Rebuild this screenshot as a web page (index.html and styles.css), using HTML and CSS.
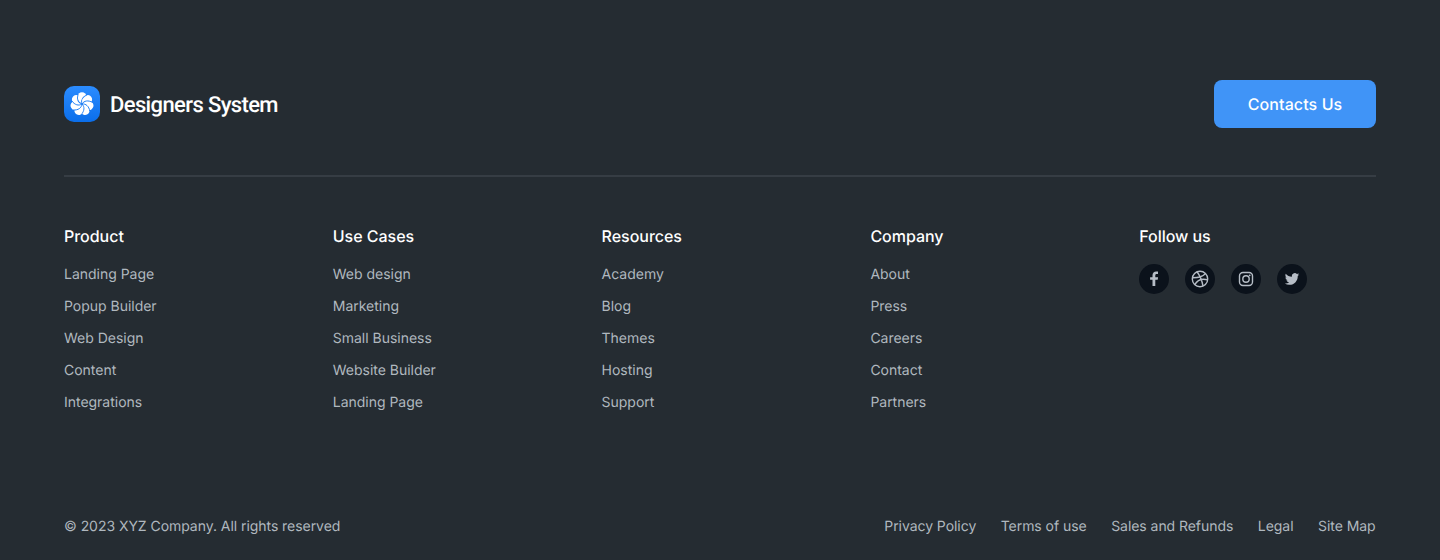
FILE: index.html
```
<!DOCTYPE html>
<html lang="en">
<head>
<meta charset="utf-8">
<title>Designers System</title>
<link rel="stylesheet" href="styles.css">
</head>
<body>
<footer class="footer">
  <div class="top">
    <a class="brand">
      <svg class="logo" width="36" height="36" viewBox="0 0 36 36">
        <defs>
          <linearGradient id="tile" x1="0" y1="0" x2="0" y2="1"><stop offset="0" stop-color="#2b8cff"/><stop offset="1" stop-color="#0b6eea"/></linearGradient>
          <circle id="lobe" cx="18" cy="10.800" r="4.500"/>
          <path id="gap" d="M18 18C15.200 15.200 15.400 11.200 18.800 7.300"/>
        </defs>
        <rect width="36" height="36" rx="10" fill="url(#tile)"/>
        <g fill="#fff">
          <circle cx="18" cy="18" r="7.500"/>
          <use href="#lobe"/>
          <use href="#lobe" transform="rotate(51.430 18 18)"/>
          <use href="#lobe" transform="rotate(102.860 18 18)"/>
          <use href="#lobe" transform="rotate(154.290 18 18)"/>
          <use href="#lobe" transform="rotate(205.710 18 18)"/>
          <use href="#lobe" transform="rotate(257.140 18 18)"/>
          <use href="#lobe" transform="rotate(308.570 18 18)"/>
        </g>
        <g fill="none" stroke="#1a7cf5" stroke-width=".9">
          <use href="#gap" transform="rotate(25.710 18 18)"/>
          <use href="#gap" transform="rotate(77.140 18 18)"/>
          <use href="#gap" transform="rotate(128.570 18 18)"/>
          <use href="#gap" transform="rotate(180 18 18)"/>
          <use href="#gap" transform="rotate(231.430 18 18)"/>
          <use href="#gap" transform="rotate(282.860 18 18)"/>
          <use href="#gap" transform="rotate(334.290 18 18)"/>
        </g>
      </svg>
      <span class="brand-name">Designers System</span>
    </a>
    <a class="button">Contacts Us</a>
  </div>
  <div class="columns">
    <div class="column"><h2 class="heading">Product</h2><ul class="links"><li>Landing Page</li><li>Popup Builder</li><li>Web Design</li><li>Content</li><li>Integrations</li></ul></div>
    <div class="column"><h2 class="heading">Use Cases</h2><ul class="links"><li>Web design</li><li>Marketing</li><li>Small Business</li><li>Website Builder</li><li>Landing Page</li></ul></div>
    <div class="column"><h2 class="heading">Resources</h2><ul class="links"><li>Academy</li><li>Blog</li><li>Themes</li><li>Hosting</li><li>Support</li></ul></div>
    <div class="column"><h2 class="heading">Company</h2><ul class="links"><li>About</li><li>Press</li><li>Careers</li><li>Contact</li><li>Partners</li></ul></div>
    <div class="column"><h2 class="heading">Follow us</h2>
      <div class="social">
        <a class="social-item" aria-label="Facebook"><svg width="30" height="30" viewBox="0 0 30 30"><path fill="currentColor" d="M13.500 22v-6.200h-2.400v-2.600h2.400v-1.900c0-2.500 1.500-3.800 3.700-3.800.9 0 1.600.1 1.800.1v2.400h-1.300c-1.100 0-1.400.6-1.400 1.400v1.800h2.800l-.4 2.600h-2.400V22z"/></svg></a>
        <a class="social-item" aria-label="Dribbble"><svg width="30" height="30" viewBox="0 0 30 30"><g fill="none" stroke="currentColor" stroke-width="1.400"><circle cx="15" cy="15" r="7.700"/><path d="M12 7.800c2.700 3.500 4.800 8 6 14.200M7.300 13.800c5.500.1 10.200-.9 13-4M9.800 20.700c2.400-4.500 7-6.500 12.900-4.900"/></g></svg></a>
        <a class="social-item" aria-label="Instagram"><svg width="30" height="30" viewBox="0 0 30 30"><g fill="none" stroke="currentColor" stroke-width="1.400"><rect x="8.500" y="8.500" width="13" height="13" rx="3.500"/><circle cx="15" cy="15" r="3.200"/></g><circle cx="18.700" cy="11.300" r=".9" fill="currentColor"/></svg></a>
        <a class="social-item" aria-label="Twitter"><svg width="30" height="30" viewBox="0 0 30 30"><path transform="translate(7.800 7.800) scale(.6)" fill="currentColor" d="M23.953 4.570a10 10 0 01-2.825.775 4.958 4.958 0 002.163-2.723c-.951.555-2.005.959-3.127 1.184a4.920 4.920 0 00-8.384 4.482C7.690 8.095 4.067 6.130 1.640 3.162a4.822 4.822 0 00-.666 2.475c0 1.710.870 3.213 2.188 4.096a4.904 4.904 0 01-2.228-.616v.060a4.923 4.923 0 003.946 4.827 4.996 4.996 0 01-2.212.085 4.936 4.936 0 004.604 3.417 9.867 9.867 0 01-6.102 2.105c-.390 0-.779-.023-1.170-.067a13.995 13.995 0 007.557 2.209c9.053 0 13.998-7.496 13.998-13.985 0-.210 0-.420-.015-.630A9.935 9.935 0 0024 4.590z"/></svg></a>
      </div>
    </div>
  </div>
  <div class="bottom">
    <span>© 2023 XYZ Company. All rights reserved</span>
    <nav class="legal"><a>Privacy Policy</a><a>Terms of use</a><a>Sales and Refunds</a><a>Legal</a><a>Site Map</a></nav>
  </div>
</footer>
</body>
</html>
```
FILE: styles.css
```
* { box-sizing: border-box; }
body { margin: 0; background: #252c32; font-family: Inter, "Liberation Sans", sans-serif; text-rendering: geometricPrecision; }
.footer { height: 560px; padding: 80px 64px 21px; display: flex; flex-direction: column; overflow: hidden; }
.top { display: flex; align-items: center; justify-content: space-between; height: 97px; padding-bottom: 47px; border-bottom: 2px solid #363d44; }
.brand { display: flex; align-items: center; gap: 10px; }
.logo { display: block; }
.brand-name { padding-top: 3px; font: 500 22px/30px Roboto, sans-serif; color: #fff; letter-spacing: -0.62px; }
.button { width: 162px; height: 48px; border-radius: 8px; background: #4094f7; color: #fff; font-size: 16px; font-weight: 500; line-height: 48px; text-align: center; letter-spacing: 0.1px; }
.columns { display: grid; grid-template-columns: repeat(5, 1fr); column-gap: 32px; padding-top: 47px; }
.heading { margin: 0 0 10px; font-size: 16px; line-height: 24px; font-weight: 500; color: #fff; letter-spacing: -0.03px; }
.links { list-style: none; margin: 0; padding: 5px 0 0; display: grid; row-gap: 8px; font-size: 14px; line-height: 24px; color: #b0b8bf; letter-spacing: -0.02px; }
.social { display: flex; gap: 16px; padding-top: 6px; }
.social-item { width: 30px; height: 30px; border-radius: 50%; background: #0b121b; color: #b6bdc6; }
.social-item svg { display: block; }
.bottom { margin-top: auto; display: flex; justify-content: space-between; font-size: 14px; line-height: 24px; color: #b0b8bf; letter-spacing: -0.05px; }
.legal { display: flex; gap: 24.5px; padding-right: 0.4px; }
```
